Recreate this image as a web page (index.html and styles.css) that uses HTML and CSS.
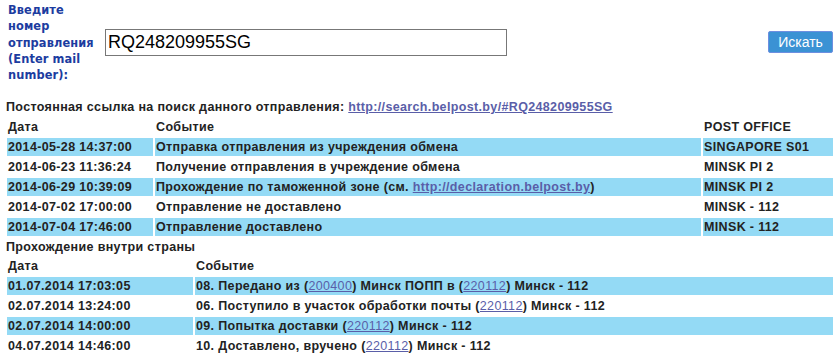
FILE: index.html
```html
<!DOCTYPE html>
<html lang="ru">
<head>
<meta charset="utf-8">
<title>Белпочта — поиск отправления</title>
<link rel="stylesheet" href="styles.css">
</head>
<body>
<form class="search">
  <div class="search-label">Введите номер отправления (Enter mail number):</div>
  <input class="search-input" type="text" value="RQ248209955SG">
  <button class="search-btn" type="button">Искать</button>
</form>
<div class="permalink">Постоянная ссылка на поиск данного отправления: <a href="#">http://search.belpost.by/#RQ248209955SG</a></div>
<table class="track track-intl">
  <tr class="head"><td class="c1">Дата</td><td class="c2">Событие</td><td class="c3">POST OFFICE</td></tr>
  <tr class="hl"><td>2014-05-28 14:37:00</td><td>Отправка отправления из учреждения обмена</td><td>SINGAPORE S01</td></tr>
  <tr><td>2014-06-23 11:36:24</td><td>Получение отправления в учреждение обмена</td><td>MINSK PI 2</td></tr>
  <tr class="hl"><td>2014-06-29 10:39:09</td><td>Прохождение по таможенной зоне (см. <a href="#">http://declaration.belpost.by</a>)</td><td>MINSK PI 2</td></tr>
  <tr><td>2014-07-02 17:00:00</td><td>Отправление не доставлено</td><td>MINSK - 112</td></tr>
  <tr class="hl"><td>2014-07-04 17:46:00</td><td>Отправление доставлено</td><td>MINSK - 112</td></tr>
</table>
<div class="subtitle">Прохождение внутри страны</div>
<table class="track track-local">
  <tr class="head"><td class="d1">Дата</td><td class="d2">Событие</td></tr>
  <tr class="hl"><td>01.07.2014 17:03:05</td><td>08. Передано из (<a class="zip" href="#">200400</a>) Минск ПОПП в (<a class="zip" href="#">220112</a>) Минск - 112</td></tr>
  <tr><td>02.07.2014 13:24:00</td><td>06. Поступило в участок обработки почты (<a class="zip" href="#">220112</a>) Минск - 112</td></tr>
  <tr class="hl"><td>02.07.2014 14:00:00</td><td>09. Попытка доставки (<a class="zip" href="#">220112</a>) Минск - 112</td></tr>
  <tr><td>04.07.2014 14:46:00</td><td>10. Доставлено, вручено (<a class="zip" href="#">220112</a>) Минск - 112</td></tr>
</table>
</body>
</html>
```
FILE: styles.css
```css
html, body {
  margin: 0;
  padding: 0;
  background: #ffffff;
}
body {
  font-family: "Liberation Sans", Arial, sans-serif;
  font-size: 12.5px;
  font-weight: bold;
  color: #222222;
  letter-spacing: 0.35px;
}
.search {
  display: flex;
  align-items: center;
  margin: 0;
  padding: 2px 5px 0 8px;
}
.search-label {
  width: 90px;
  font-family: "DejaVu Sans", Verdana, sans-serif;
  font-size: 11.4px;
  font-weight: bold;
  line-height: 16.25px;
  color: #1c3ca0;
  letter-spacing: 0.1px;
}
.search-input {
  margin-left: 7px;
  width: 402px;
  height: 27px;
  box-sizing: border-box;
  border: 1px solid #777777;
  padding: 0 0 0 2px;
  font-family: "Liberation Sans", Arial, sans-serif;
  font-size: 18px;
  font-weight: normal;
  letter-spacing: 0;
  color: #000000;
  outline: none;
}
.search-btn {
  margin-left: auto;
  width: 65px;
  height: 22px;
  box-sizing: border-box;
  border: 1px solid #6d8fe0;
  border-radius: 2px;
  background: #3b92d4;
  color: #ffffff;
  font-family: "Liberation Sans", Arial, sans-serif;
  font-size: 14px;
  font-weight: normal;
  letter-spacing: 0;
  padding: 0;
  margin-top: -2px;
}
.permalink {
  margin-top: 15px;
  padding-left: 6px;
  line-height: 18px;
  height: 18px;
}
a {
  color: #5a5ea8;
  text-decoration: underline;
}
a.zip {
  font-weight: normal;
}
.track {
  border-collapse: separate;
  border-spacing: 2px;
  margin-left: 5px;
  width: 830px;
  table-layout: fixed;
}
.track td {
  height: 18px;
  line-height: 18px;
  padding: 0 0 0 1px;
  white-space: nowrap;
  overflow: hidden;
  vertical-align: middle;
}
.track .hl td {
  background: #94daf5;
}
.c1 { width: 145px; }
.c2 { width: 545px; }
.c3 { width: 129px; }
.d1 { width: 185px; }
.d2 { width: 637px; }
.subtitle {
  padding-left: 6px;
  line-height: 18px;
  height: 17px;
}
```
